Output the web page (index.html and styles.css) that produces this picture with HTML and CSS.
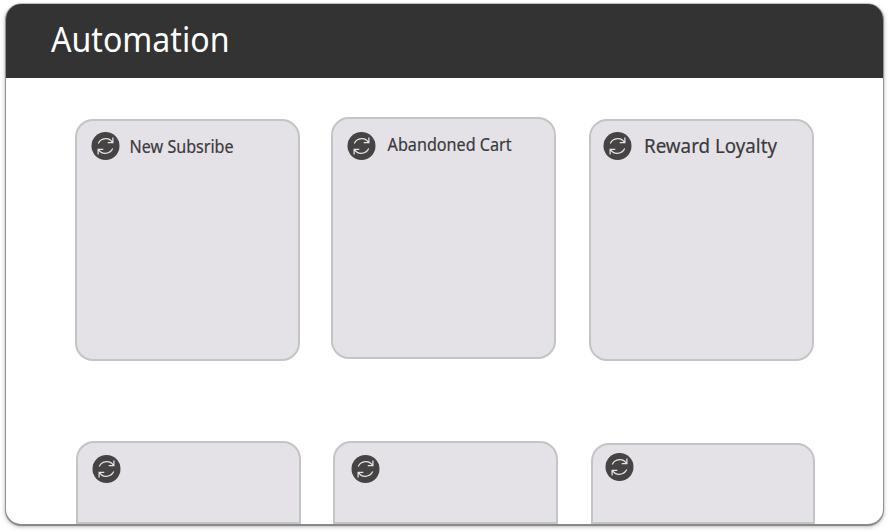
FILE: index.html
```html
<!DOCTYPE html>
<html lang="en">
<head>
<meta charset="utf-8">
<title>Automation</title>
<link rel="stylesheet" href="styles.css">
</head>
<body>
<svg class="defs" width="0" height="0" aria-hidden="true">
  <symbol id="sync" viewBox="-0.5 0 29 28">
    <circle cx="14" cy="14" r="14" fill="#454443"/>
    <g fill="none" stroke="#e5e2e8" stroke-width="1.25">
      <path d="M6.8 11.4C9.5 5.6 17.8 4.9 21.2 10.6M21.4 5.4V10.7H16.2"/>
      <path d="M21.2 16.6C18.5 22.4 10.2 23.1 6.8 17.4M6.6 22.6V17.3H11.8"/>
    </g>
  </symbol>
</svg>
<div class="window">
  <header class="header">
    <svg class="title" width="190" height="48"><text x="0" y="32" textLength="178.5" lengthAdjust="spacingAndGlyphs">Automation</text></svg>
  </header>
  <main class="board">
    <section class="row row-top">
      <article class="card">
        <svg class="icon"><use href="#sync"/></svg>
        <svg class="label" width="110" height="28"><text x="0" y="21" textLength="104" lengthAdjust="spacingAndGlyphs">New Subsribe</text></svg>
      </article>
      <article class="card card-cart">
        <svg class="icon"><use href="#sync"/></svg>
        <svg class="label" width="130" height="28"><text x="0" y="19" textLength="124" lengthAdjust="spacingAndGlyphs">Abandoned Cart</text></svg>
      </article>
      <article class="card card-loyalty">
        <svg class="icon"><use href="#sync"/></svg>
        <svg class="label label-large" width="140" height="28"><text x="0" y="21" textLength="133" lengthAdjust="spacingAndGlyphs">Reward Loyalty</text></svg>
      </article>
    </section>
    <section class="row row-bottom">
      <article class="card"><svg class="icon"><use href="#sync"/></svg></article>
      <article class="card card-middle"><svg class="icon"><use href="#sync"/></svg></article>
      <article class="card card-last"><svg class="icon"><use href="#sync"/></svg></article>
    </section>
  </main>
</div>
</body>
</html>
```
FILE: styles.css
```css
* { box-sizing: border-box; }
html, body { margin: 0; height: 100%; overflow: hidden; background: #fff; }
body { padding: 4px 6px 0 6px; font-family: "Noto Sans", "Open Sans", sans-serif; }
.defs { display: none; }
.window {
  height: 520px;
  border-radius: 15px;
  overflow: hidden;
  background: #fff;
  box-shadow: 0 0 0 0.5px #999, 0 1px 1px 1px rgba(0,0,0,.38), 0 2px 4px 1px rgba(0,0,0,.25);
}
.header { height: 74px; padding: 16px 0 0 45px; background: #333; }
.title { display: block; overflow: visible; }
.title text { font-size: 34px; fill: #fff; }
.board { height: 446px; padding-left: 69px; }
.row { display: flex; align-items: flex-start; }
.row-top { padding-top: 41px; height: 363px; }
.row-bottom { padding-left: 1px; height: 83px; }
.card {
  display: flex;
  flex: none;
  width: 225px;
  height: 242px;
  padding: 11px 0 0 14px;
  border: 2px solid #c3c4c6;
  border-radius: 18px;
  background: #e4e2e7;
}
.card-cart { margin: -2px 0 0 31px; padding-top: 13px; }
.card-loyalty { margin-left: 33px; padding-left: 12px; }
.row-bottom .card { height: 83px; padding-top: 12px; border-radius: 18px 18px 0 0; }
.row-bottom .card-middle { margin-left: 32px; padding-left: 16px; }
.row-bottom .card-last { width: 224px; height: 81px; margin: 2px 0 0 33px; padding: 8px 0 0 12px; }
.icon { flex: none; width: 29px; height: 28px; }
.label { margin-left: 9px; overflow: visible; }
.label text { font-size: 17.3px; fill: #3b3a3c; stroke: #3b3a3c; stroke-width: .2px; transform: translateX(.6px); }
.card-cart .label { margin-left: 11px; }
.card-loyalty .label { margin-left: 12px; }
.label.label-large text { font-size: 20px; transform: none; }
```
